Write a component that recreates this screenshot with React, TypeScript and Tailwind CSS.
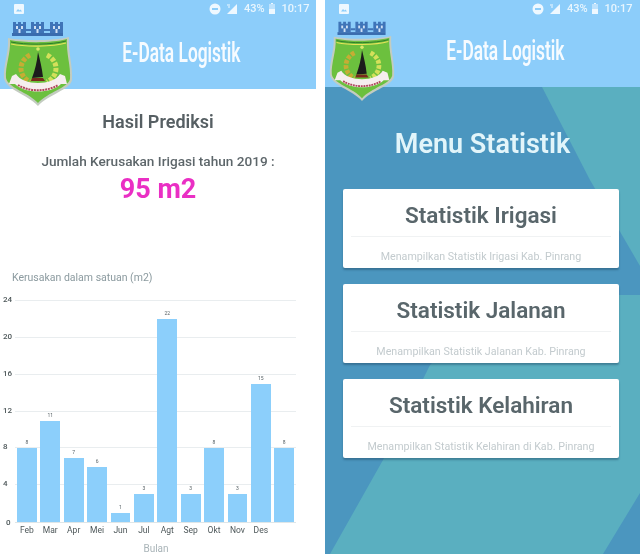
const BARS = [
  { label: 'Feb', value: 8 },
  { label: 'Mar', value: 11 },
  { label: 'Apr', value: 7 },
  { label: 'Mei', value: 6 },
  { label: 'Jun', value: 1 },
  { label: 'Jul', value: 3 },
  { label: 'Agt', value: 22 },
  { label: 'Sep', value: 3 },
  { label: 'Okt', value: 8 },
  { label: 'Nov', value: 3 },
  { label: 'Des', value: 15 },
  { label: '', value: 8 },
];

const TICKS = [24, 20, 16, 12, 8, 4];
const UNIT = 221 / 24;

const CARDS = [
  { title: 'Statistik Irigasi', sub: 'Menampilkan Statistik Irigasi Kab. Pinrang' },
  { title: 'Statistik Jalanan', sub: 'Menampilkan Statistik Jalanan Kab. Pinrang' },
  { title: 'Statistik Kelahiran', sub: 'Menampilkan Statistik Kelahiran di Kab. Pinrang' },
];

function Tower({ x }: { x: number }) {
  return (
    <g transform={`translate(${x} 0)`}>
      <path d="M0 4h3v2h2V4h3v2h2V4h3v11H0z" fill="#3f74b8" />
      <rect x="3" y="8" width="2" height="3" fill="#cfe0f4" />
      <rect x="8" y="8" width="2" height="3" fill="#cfe0f4" />
      <rect x="5.5" y="11" width="2" height="4" fill="#cfe0f4" />
    </g>
  );
}

function Logo({ width }: { width: number }) {
  return (
    <svg width={width} viewBox="0 0 70 88">
      {/* towers */}
      <Tower x={10} />
      <Tower x={28} />
      <Tower x={47} />
      <rect x="9" y="15" width="51" height="3" fill="#3a6cae" />
      <path d="M23 12h5M41 12h6" stroke="#3f74b8" strokeWidth="2" />
      {/* shield */}
      <path
        d="M5 20 C20 23 50 23 66 19 C65 34 70 48 69 62 C67 72 46 76 35 88 C24 76 3 72 1 60 C0 48 6 34 5 20Z"
        fill="#c3ccc0"
      />
      <path
        d="M7 22 C22 25 49 25 64 21 C63 35 68 48 67 61 C65 70 45 74 35 85 C25 74 5 70 3 60 C2 48 8 35 7 22Z"
        fill="#6cc03e"
      />
      <path d="M8 24 C22 27 49 27 63 23" stroke="#2d7a2a" strokeWidth="1" fill="none" />
      <path d="M8 26 C22 29 49 29 63 25" stroke="#e9e25a" strokeWidth="1.2" fill="none" />
      {/* wreath */}
      <path d="M27 37 C15 43 15 58 27 64" stroke="#c6ad34" strokeWidth="5" strokeDasharray="4 1.5" fill="none" />
      <path d="M44 37 C56 43 56 58 44 64" stroke="#d4e05a" strokeWidth="5" strokeDasharray="4 1.5" fill="none" />
      {/* badik */}
      <path d="M35 34 C37 42 39 50 40 59 L29 60 C32 52 34 44 35 34Z" fill="#1c1c1c" />
      <circle cx="35" cy="31" r="1.8" fill="#d8e86a" />
      <path d="M29 60h11l2 3H28z" fill="#7a2a1c" />
      {/* ribbon */}
      <path d="M9 58 L13 56 C20 68 50 68 57 56 L62 58 L64 66 L58 66 C48 76 22 76 12 66 L6 66Z" fill="#f6eeee" />
      <path d="M15 67 C26 74 44 74 55 67" stroke="#b0485c" strokeWidth="2" strokeDasharray="2 0.8" fill="none" />
    </svg>
  );
}

function StatusBar({ right }: { right?: boolean }) {
  return (
    <div className="flex h-[17px] items-center text-[11px] font-medium leading-none text-[#e9f6fe]">
      <svg className="ml-[14px]" width="10" height="10" viewBox="0 0 10 10">
        <rect width="10" height="10" rx="1" fill="#eef8ff" />
        <path d="M2 7.5 L4 5 L5.5 6.5 L6.5 5.5 L8 7.5Z" fill="#8ccdfa" />
      </svg>
      <svg className={right ? 'ml-[183px]' : 'ml-[185px]'} width="12" height="12" viewBox="0 0 12 12">
        <circle cx="6" cy="6" r="5.5" fill="#eef8ff" />
        <rect x="3" y="5" width="6" height="2" fill="#8ccdfa" />
      </svg>
      <svg className="ml-[5px]" width="11" height="10" viewBox="0 0 11 10">
        <path d="M11 0V10H1Z" fill="#eef8ff" />
        <path d="M1 1h3M2 3h2" stroke="#eef8ff" strokeWidth="1" />
      </svg>
      <span className="ml-[7px]">43%</span>
      <svg className="ml-[4px]" width="6" height="11" viewBox="0 0 6 11">
        <rect x="2" width="2" height="1" fill="#eef8ff" />
        <rect y="1" width="6" height="10" fill="#eef8ff" opacity="0.5" />
        <rect y="6" width="6" height="5" fill="#eef8ff" />
      </svg>
      <span className="ml-[7px]">10:17</span>
    </div>
  );
}

function Header({ right }: { right?: boolean }) {
  return (
    <header className={`relative bg-[#8ccdfa] ${right ? 'h-[87px]' : 'h-[89px]'}`}>
      <StatusBar right={right} />
      <div className={`flex justify-center pl-[46px] ${right ? 'mt-[19px]' : 'mt-[21px]'}`}>
        <span className="scale-x-[0.62] text-[28px] font-semibold leading-[30px] whitespace-nowrap text-[#f6fbff]">
          E-Data Logistik
        </span>
      </div>
      <div className={`absolute top-[18px] ${right ? 'left-[4px]' : 'left-[3px]'}`}>
        <Logo width={right ? 66 : 70} />
      </div>
    </header>
  );
}

function Chart() {
  return (
    <div className="mt-[17px] flex">
      <div className="relative h-[221px] w-[14px]">
        <span className="absolute left-[6px] bottom-[-4px] text-[8px] leading-[8px] font-medium text-[#4d5759]">0</span>
      </div>
      <div className="relative ml-px h-[221px] w-[281px] border-b border-[#dfe6e8]">
        {TICKS.map((tick) => (
          <div
            key={tick}
            className="absolute inset-x-0 h-px bg-[#e9edef]"
            style={{ bottom: tick * UNIT }}
          >
            <span className="absolute left-[-12px] top-[-4px] text-[8px] leading-[8px] font-medium text-[#4d5759]">
              {tick}
            </span>
          </div>
        ))}
        <div className="absolute inset-0 flex items-end gap-[3.6px] pl-[2px]">
          {BARS.map((bar, i) => (
            <div key={i} className="relative w-[19.8px] bg-[#8ccffb]" style={{ height: bar.value * UNIT }}>
              <span className="absolute inset-x-0 top-[-9px] text-center text-[5px] leading-[7px] text-[#555f63]">
                {bar.value}
              </span>
              <span className="absolute inset-x-[-2px] bottom-[-13px] text-center text-[8.5px] leading-[10px] text-[#4d5759]">
                {bar.label}
              </span>
            </div>
          ))}
        </div>
      </div>
    </div>
  );
}

function PredictionScreen() {
  return (
    <section className="h-[554px] w-[316px] shrink-0 overflow-hidden bg-white">
      <Header />
      <h1 className="mt-[22px] text-center text-[18px] leading-[22px] font-semibold text-[#565f63]">Hasil Prediksi</h1>
      <p className="mt-[19px] text-center text-[13.6px] leading-[18px] font-medium text-[#5d666a]">
        Jumlah Kerusakan Irigasi tahun 2019 :
      </p>
      <p className="mt-[2px] text-center text-[27px] leading-[34px] font-bold text-[#ea2fc4]">95 m2</p>
      <p className="mt-[65px] ml-[12px] text-[10.5px] leading-[14px] text-[#8b9a9f]">Kerusakan dalam satuan (m2)</p>
      <Chart />
      <p className="mt-[19px] pr-[4px] text-center text-[10px] leading-[14px] text-[#a9b4b8]">Bulan</p>
    </section>
  );
}

function MenuScreen() {
  return (
    <section className="relative h-[554px] flex-1 overflow-hidden bg-[#4b96bf]">
      {/* background shapes */}
      <svg className="absolute inset-0" width="315" height="554" viewBox="0 0 315 554">
        <path d="M217 87 H315 V266 L265 180Z" fill="#5aafc0" />
        <path d="M315 295 V493 L278 554 H5 L58 460 L105 365 L130 340 L200 295Z" fill="#5aafc0" />
      </svg>
      <div className="relative">
        <Header right />
        <h1 className="mt-[39px] text-center text-[27px] leading-[36px] font-semibold text-[#e2f5fa]">Menu Statistik</h1>
        <div className="mt-[27px] ml-[18px] flex w-[276px] flex-col gap-[16px]">
          {CARDS.map((card) => (
            <div key={card.title} className="flex h-[79px] flex-col rounded-[2px] bg-white shadow-[0_2px_2px_rgba(30,70,100,0.45)]">
              <h2 className="mx-[8px] h-[48px] border-b border-[#f0f2f3] pt-[13px] text-center text-[22.5px] leading-[26px] font-semibold whitespace-nowrap text-[#59666b]">
                {card.title}
              </h2>
              <p className="mt-[13px] text-center text-[10.7px] leading-[14px] whitespace-nowrap text-[#c3cbce]">
                {card.sub}
              </p>
            </div>
          ))}
        </div>
      </div>
    </section>
  );
}

export default function App() {
  return (
    <div className="flex h-[554px] w-[640px] gap-[9px] overflow-hidden bg-white font-['Roboto',sans-serif] blur-[0.5px]">
      <PredictionScreen />
      <MenuScreen />
    </div>
  );
}
